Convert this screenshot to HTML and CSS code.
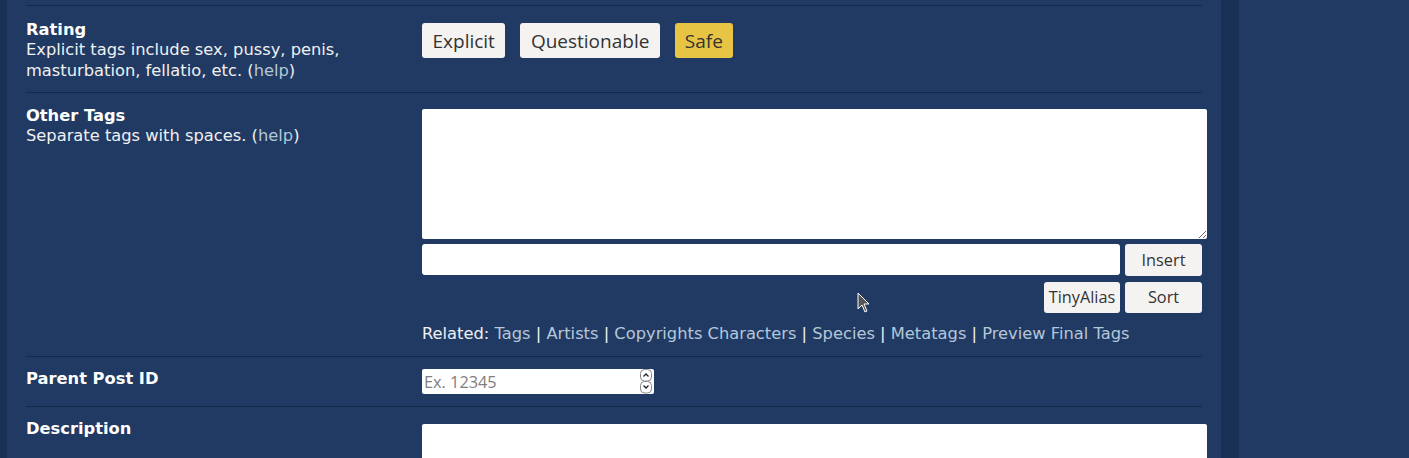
FILE: index.html
```html
<!DOCTYPE html>
<html>
<head>
<meta charset="utf-8">
<link rel="stylesheet" href="styles.css">
</head>
<body>
<div class="page">
  <div class="edge"></div>
  <main class="panel">
    <div class="row tall first">
      <div class="label">
        <div class="title">Rating</div>
        <div class="hint">Explicit tags include sex, pussy, penis, masturbation, fellatio, etc. (<a href="#">help</a>)</div>
      </div>
      <div class="field">
        <div class="ratings">
          <button class="rbtn">Explicit</button>
          <button class="rbtn">Questionable</button>
          <button class="rbtn safe">Safe</button>
        </div>
      </div>
    </div>
    <div class="row tall">
      <div class="label">
        <div class="title">Other Tags</div>
        <div class="hint">Separate tags with spaces. (<a href="#">help</a>)</div>
      </div>
      <div class="field">
        <textarea class="tags"></textarea>
        <div class="line">
          <input class="tagin" type="text">
          <button class="sbtn">Insert</button>
        </div>
        <div class="line right">
          <button class="sbtn alias">TinyAlias</button>
          <button class="sbtn">Sort</button>
        </div>
        <div class="related">Related: <a href="#">Tags</a> | <a href="#">Artists</a> | <a href="#">Copyrights Characters</a> | <a href="#">Species</a> | <a href="#">Metatags</a> | <a href="#">Preview Final Tags</a></div>
      </div>
    </div>
    <div class="row">
      <div class="label">
        <div class="title">Parent Post ID</div>
      </div>
      <div class="field">
        <div class="numbox">
          <span class="ph">Ex. 12345</span>
          <svg class="spin" width="14" height="25" viewBox="0 0 14 25">
            <rect x="1.5" y="0.5" width="11" height="11.5" rx="4" fill="#fff" stroke="#8a8a8a"/>
            <rect x="1.5" y="12.5" width="11" height="11.5" rx="4" fill="#fff" stroke="#8a8a8a"/>
            <path d="M4.5 7.5 L7 5 L9.5 7.5" fill="none" stroke="#222" stroke-width="1.3"/>
            <path d="M4.5 16.5 L7 19 L9.5 16.5" fill="none" stroke="#222" stroke-width="1.3"/>
          </svg>
        </div>
      </div>
    </div>
    <div class="row">
      <div class="label">
        <div class="title">Description</div>
      </div>
      <div class="field">
        <textarea class="desc"></textarea>
      </div>
    </div>
  </main>
  <div class="divider"></div>
  <aside class="side"></aside>
</div>
<svg class="cursor" width="14" height="22" viewBox="0 0 14 22"><path d="M1 1 L1 17 L5 13 L8 20 L10 19 L7 12 L12 12 Z" fill="#555" stroke="#fff" stroke-width="1"/></svg>
</body>
</html>
```

FILE: styles.css
```css
html, body {
  margin: 0;
  padding: 0;
  background: #203a63;
  height: 100%;
  overflow: hidden;
}
.page {
  display: flex;
  height: 458px;
  font-family: "DejaVu Sans", Verdana, sans-serif;
  font-size: 16.3px;
  color: #ffffff;
}
.edge {
  width: 7px;
  background: #182f56;
}
.panel {
  width: 1176px;
  padding: 5px 19px 0 19px;
  background: #203a63;
}
.divider {
  width: 18px;
  background: #182f56;
}
.side {
  flex: 1;
  background: #203a63;
}
.row {
  display: grid;
  grid-template-columns: 396px 780px;
  border-top: 1px solid #15294a;
  padding: 12px 0 12px 0;
}
.row.tall {
  padding-top: 13px;
}
.row.first {
  padding-top: 13.5px;
  padding-bottom: 10.5px;
}
.label {
  line-height: 20.5px;
}
.title {
  font-weight: bold;
}
.hint {
  color: #f0f0f0;
  padding-right: 40px;
}
a {
  color: #b4c7d9;
  text-decoration: none;
}
.ratings {
  display: flex;
  gap: 15px;
  padding-top: 3.5px;
}
button {
  font-family: "Open Sans", sans-serif;
  color: #333;
  background: #f4f3f2;
  border: 0;
  border-radius: 3px;
  padding: 0;
  cursor: pointer;
}
.rbtn {
  height: 35px;
  font-size: 19px;
  padding: 0 10.5px;
}
.rbtn.safe {
  background: #e8c444;
  padding: 0 10px;
}
textarea {
  display: block;
  box-sizing: border-box;
  width: 785px;
  border: 0;
  border-radius: 2px;
  background: #fff;
  margin: 0;
}
.tags {
  height: 130px;
  margin-top: 3px;
}
.line {
  display: flex;
  gap: 5px;
  margin-top: 5px;
}
.line.right {
  justify-content: flex-end;
  margin-top: 6px;
}
.tagin {
  box-sizing: border-box;
  width: 698px;
  height: 31px;
  border: 0;
  border-radius: 3px;
  margin: 0;
}
.sbtn {
  width: 77px;
  height: 32px;
  font-size: 16.3px;
}
.line.right .sbtn {
  height: 31px;
}
.sbtn.alias {
  width: 76px;
}
.related {
  margin-top: 11px;
  line-height: 20.5px;
  color: #f0f0f0;
}
.numbox {
  box-sizing: border-box;
  width: 232px;
  height: 25px;
  background: #fff;
  border-radius: 2px;
  display: flex;
  align-items: center;
  justify-content: space-between;
  padding: 0 1px 0 2px;
}
.ph {
  font-family: "Open Sans", sans-serif;
  font-size: 16.3px;
  color: #808080;
}
.spin {
  display: block;
}
.desc {
  height: 60px;
  margin-top: 5px;
}
.cursor {
  position: absolute;
  left: 857px;
  top: 292px;
}
```
